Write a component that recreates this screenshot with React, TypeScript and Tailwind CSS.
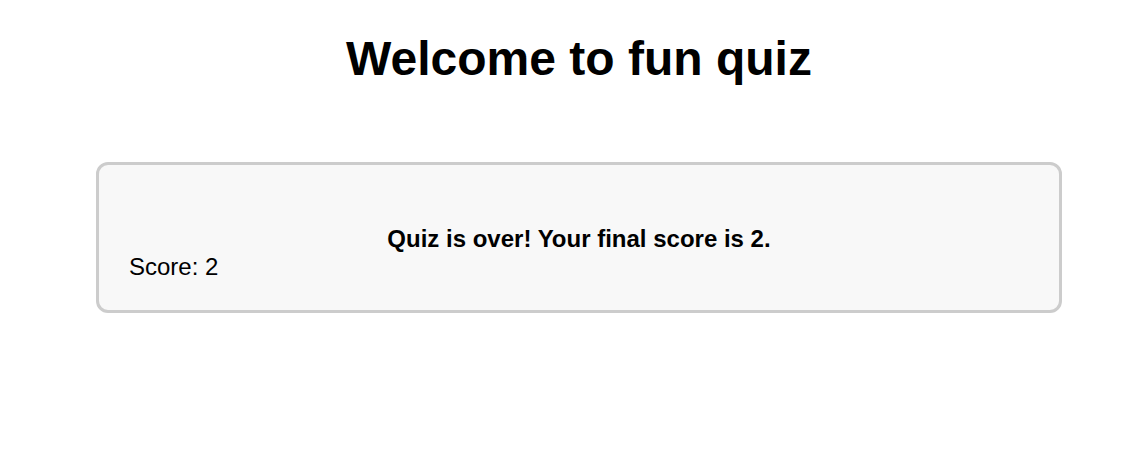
export default function App() {
  const score = 2;

  return (
    <div className="min-h-[461px] bg-white pl-[33px] font-['Liberation_Sans',Arial,sans-serif] text-black">
      <h1 className="pt-[31px] text-center text-[48px] font-bold leading-[55px]">Welcome to fun quiz</h1>

      <div className="mx-[63px] mt-[76px] rounded-[12px] border-[3px] border-[#cccccc] bg-[#f8f8f8] px-[30px] pt-[30px] pb-[29px]">
        <p className="mt-[30px] text-center text-[24px] font-bold leading-[28px]">
          Quiz is over! Your final score is {score}.
        </p>
        <p className="text-[24px] leading-[28px]">Score: {score}</p>
      </div>
    </div>
  );
}
